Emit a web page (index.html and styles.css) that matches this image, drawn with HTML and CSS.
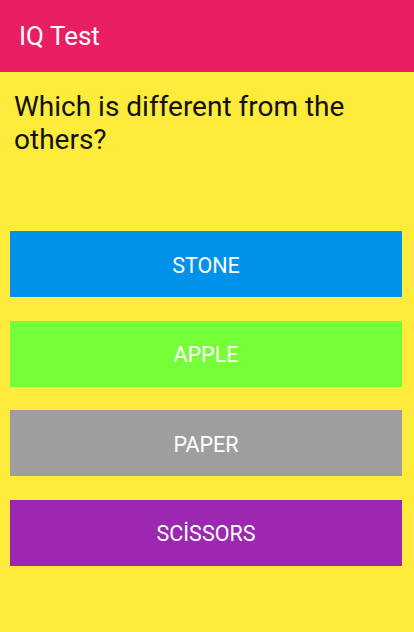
FILE: index.html
```html
<!DOCTYPE html>
<html>
<head>
<meta charset="utf-8">
<link rel="stylesheet" href="styles.css">
</head>
<body>
<div class="app">
  <header class="toolbar"><span class="title">IQ Test</span></header>
  <main class="content">
    <p class="question">Which is different from the others?</p>
    <div class="options">
      <button class="option blue">STONE</button>
      <button class="option green">APPLE</button>
      <button class="option gray">PAPER</button>
      <button class="option purple">SCİSSORS</button>
    </div>
  </main>
</div>
</body>
</html>
```
FILE: styles.css
```css
html, body {
  margin: 0;
  padding: 0;
}
body {
  background: #FFEB3B;
  font-family: Roboto, "Noto Sans", sans-serif;
}
.app {
  display: flex;
  flex-direction: column;
  width: 414px;
  height: 632px;
}
.toolbar {
  height: 72px;
  background: #E91E63;
  display: flex;
  align-items: center;
  padding-left: 19px;
  box-sizing: border-box;
}
.title {
  color: #fff;
  font-size: 26px;
  line-height: 1;
  margin-top: -1px;
}
.content {
  padding: 18px 12px 0 10px;
  display: flex;
  flex-direction: column;
}
.question {
  margin: 0 0 0 4px;
  font-size: 28px;
  line-height: 33px;
  color: #111;
}
.options {
  margin-top: 75px;
  display: flex;
  flex-direction: column;
  gap: 23.5px;
}
.option {
  height: 66px;
  border: none;
  margin: 0;
  padding: 2px 0 0 0;
  width: 392px;
  color: #fff;
  font-family: Roboto, "Noto Sans", sans-serif;
  font-size: 21.5px;
  display: flex;
  align-items: center;
  justify-content: center;
}
.blue { background: #0091EA; }
.green { background: #76FF39; }
.gray { background: #9E9E9E; }
.purple { background: #9C27B0; }
```
